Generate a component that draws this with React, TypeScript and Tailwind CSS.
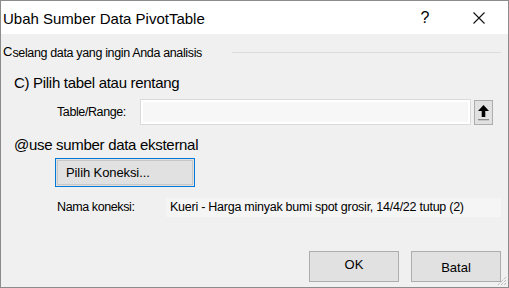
import React from "react";

const F = { fontFamily: '"Liberation Sans", Arial, sans-serif' };

export default function App() {
  return (
    <div
      className="w-[509px] h-[288px] border border-[#8c8c8c] bg-[#f0f0f0] flex flex-col text-black overflow-hidden relative"
      style={F}
    >
      {/* Title bar */}
      <div className="h-[33px] bg-white flex items-center shrink-0">
        <div className="pl-[2px] text-[15px] leading-none pt-[2px]">Ubah Sumber Data PivotTable</div>
        <div className="ml-auto flex items-center">
          <div className="w-[46px] text-center text-[16px] leading-none pt-[1px] mr-[8px]">?</div>
          <div className="w-[46px] flex justify-center mr-[6px]">
            <svg width="12" height="12" viewBox="0 0 12 12">
              <path d="M0.5 0.5 L11.5 11.5 M11.5 0.5 L0.5 11.5" stroke="#111" strokeWidth="1.1" />
            </svg>
          </div>
        </div>
      </div>

      {/* Body */}
      <div className="flex flex-col pl-[2px]">
        <div className="flex items-center h-[18px] mt-[10px]">
          <span className="text-[13px] leading-none -mt-[4px]">C</span>
          <span className="text-[12.5px] tracking-[-0.35px] leading-none">selang data yang ingin Anda analisis</span>
          <div className="flex-1 h-[1px] bg-[#dcdcdc] ml-[30px] mr-[7px] -mt-[2px]" />
        </div>

        <div className="h-[20px] mt-[11px] pl-[11px] text-[15px] tracking-[-0.3px] leading-[20px]">C) Pilih tabel atau rentang</div>

        <div className="flex items-center mt-[6px] h-[26px]">
          <div className="w-[137px] pl-[54px] text-[12.5px] tracking-[-0.4px]">Table/Range:</div>
          <div className="w-[331px] h-[26px] border border-[#dadada] bg-white p-[2px]">
            <div className="w-full h-full bg-[#f7f7f7]" />
          </div>
          <div className="ml-[3px] w-[19px] h-[25px] border border-[#adadad] bg-[#e1e1e1] flex items-center justify-center">
            <svg width="13" height="17" viewBox="0 0 13 17">
              <path d="M6.5 1 L12 7 L8.3 7 L8.3 13 L4.7 13 L4.7 7 L1 7 Z" fill="#000" />
              <rect x="1" y="15" width="11" height="1.3" fill="#8a8a8a" />
            </svg>
          </div>
        </div>

        <div className="h-[20px] mt-[10px] pl-[11px] text-[15px] tracking-[-0.3px] leading-[20px]">@use sumber data eksternal</div>

        <div className="mt-[3px] ml-[52px] w-[140px] h-[29px] border border-[#0078d7] p-[1px] bg-[#e1e1e1]">
          <div className="w-full h-full border border-[#c7c7c7] flex items-center pl-[8px] text-[13px] tracking-[-0.1px]">
            Pilih Koneksi...
          </div>
        </div>

        <div className="flex items-center mt-[11px] h-[19px]">
          <div className="w-[163px] pl-[54px] text-[12.5px] tracking-[-0.4px]">Nama koneksi:</div>
          <div className="w-[335px] h-[19px] bg-[#f5f5f5] flex items-center pl-[4px] text-[12.5px] tracking-[-0.25px] whitespace-nowrap">
            Kueri - Harga minyak bumi spot grosir, 14/4/22 tutup (2)
          </div>
        </div>

        <div className="flex justify-end gap-[12px] mt-[34px] mr-[7px]">
          <div className="w-[90px] h-[31px] border border-[#adadad] bg-[#e1e1e1] flex items-center justify-center text-[13px] pb-[4px]">
            OK
          </div>
          <div className="w-[90px] h-[31px] border border-[#adadad] bg-[#e1e1e1] flex items-center justify-center text-[13px] pt-[2px]">
            Batal
          </div>
        </div>
      </div>

      <svg className="absolute right-[1px] bottom-[1px]" width="10" height="10" viewBox="0 0 10 10">
        <path d="M9 1 L1 9 M9 4 L4 9 M9 7 L7 9" stroke="#a0a0a0" strokeWidth="1" strokeDasharray="1 1" />
      </svg>
    </div>
  );
}
